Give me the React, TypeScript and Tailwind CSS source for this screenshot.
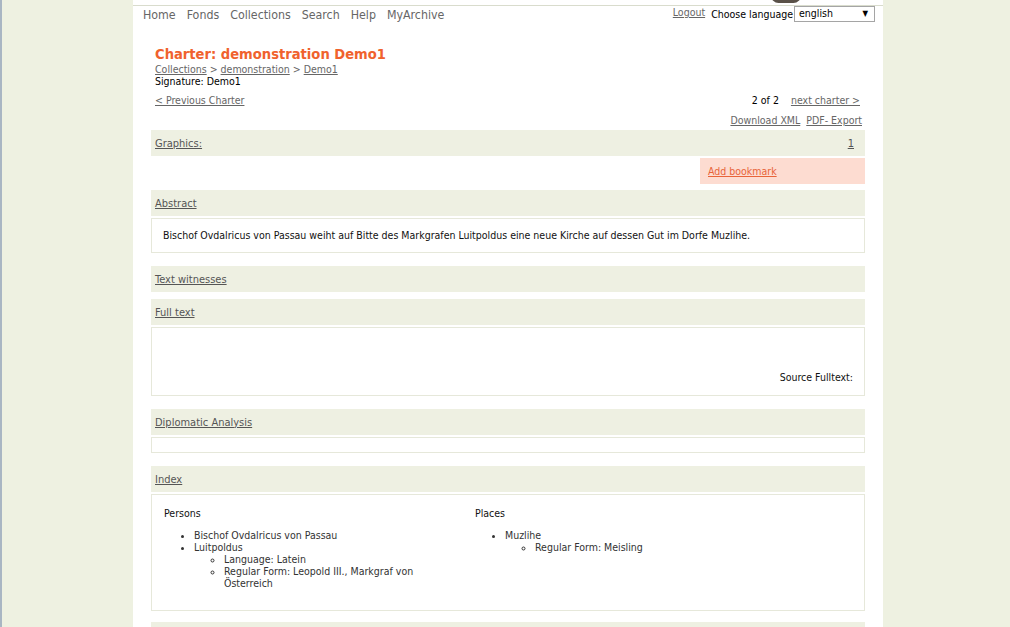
import React from "react";

const F = { fontFamily: '"DejaVu Sans Condensed", "DejaVu Sans", sans-serif' };

function Header({ label, right }: { label: string; right?: string }) {
  return (
    <div className="h-[26px] bg-[#eef0e2] flex items-center justify-between px-[4px] pt-[2px] text-[11px]">
      <a className="underline text-[#555]">{label}</a>
      {right && <a className="underline text-[#555] mr-[7px]">{right}</a>}
    </div>
  );
}

export default function App() {
  return (
    <div style={F} className="w-[1010px] h-[627px] overflow-hidden bg-[#eef1e1] border-l-2 border-[#a9b6c3] relative">
      <div className="ml-[131px] w-[750px] h-full bg-white relative">
        <div className="absolute left-[638px] top-[-12px] w-[30px] h-[15px] rounded-full bg-[#5a5148]" />
        <div className="h-[6px] border-b border-[#d9dccd]" />
        <div className="flex items-center justify-between h-[17px] pl-[10px] pr-[8px]">
          <div className="flex gap-[11px] text-[12.3px] text-[#666] pt-[2px]">
            <span>Home</span>
            <span>Fonds</span>
            <span>Collections</span>
            <span>Search</span>
            <span>Help</span>
            <span>MyArchive</span>
          </div>
          <div className="flex items-center text-[10.5px] text-black">
            <a className="underline text-[#666] mr-[6px] -mt-[3px]">Logout</a>
            <span>Choose language</span>
            <div className="ml-[1px] w-[81px] h-[16px] border border-[#a5a5a5] flex items-center justify-between pl-[4px] pr-[6px] -mt-[1px]">
              <span>english</span>
              <span className="text-[8px]">▼</span>
            </div>
          </div>
        </div>
        <div className="px-[18px] text-[10.5px]">
          <div className="pl-[4px] pt-[23px]">
            <div className="text-[14.6px] font-bold text-[#f0622d] leading-[16px]">Charter: demonstration Demo1</div>
            <div className="leading-[12px] text-[#666] mt-[1px]">
              <a className="underline">Collections</a> &gt; <a className="underline">demonstration</a> &gt; <a className="underline">Demo1</a>
            </div>
            <div className="leading-[12px] text-black">Signature: Demo1</div>
            <div className="flex justify-between leading-[12px] mt-[7px] pr-[5px]">
              <a className="underline text-[#666]">&lt; Previous Charter</a>
              <div className="flex gap-[12px]">
                <span className="text-black">2 of 2</span>
                <a className="underline text-[#666]">next charter &gt;</a>
              </div>
            </div>
            <div className="flex justify-end gap-[6px] leading-[12px] mt-[8px] pr-[3px] text-[#666]">
              <a className="underline">Download XML</a>
              <a className="underline">PDF- Export</a>
            </div>
          </div>
          <div className="mt-[4px]">
            <Header label="Graphics:" right="1" />
            <div className="flex justify-end mt-[2px]">
              <div className="w-[165px] h-[26px] bg-[#fddcd1] flex items-center pl-[8px] pt-[2px]">
                <a className="underline text-[#e8643a]">Add bookmark</a>
              </div>
            </div>
            <div className="mt-[6px]">
              <Header label="Abstract" />
            </div>
            <div className="mt-[2px] h-[35px] border border-[#e6e8da] flex items-center pl-[11px] pt-[1px] text-[#111]">
              Bischof Ovdalricus von Passau weiht auf Bitte des Markgrafen Luitpoldus eine neue Kirche auf dessen Gut im Dorfe Muzlihe.
            </div>
            <div className="mt-[13px]">
              <Header label="Text witnesses" />
            </div>
            <div className="mt-[7px]">
              <Header label="Full text" />
            </div>
            <div className="mt-[2px] h-[69px] border border-[#e6e8da] flex items-end justify-end pr-[11px] pb-[9px] text-[#111]">
              Source Fulltext:
            </div>
            <div className="mt-[13px]">
              <Header label="Diplomatic Analysis" />
            </div>
            <div className="mt-[2px] h-[16px] border border-[#e6e8da]" />
            <div className="mt-[13px]">
              <Header label="Index" />
            </div>
            <div className="mt-[2px] h-[117px] border border-[#e6e8da] flex pl-[12px] pt-[12px] leading-[12px] text-[#111]">
              <div className="w-[311px]">
                <div>Persons</div>
                <ul className="mt-[10px] pl-[30px] list-disc text-[#333]">
                  <li>Bischof Ovdalricus von Passau</li>
                  <li>
                    Luitpoldus
                    <ul className="pl-[30px] list-[circle]">
                      <li>Language: Latein</li>
                      <li className="w-[200px]">Regular Form: Leopold III., Markgraf von Österreich</li>
                    </ul>
                  </li>
                </ul>
              </div>
              <div>
                <div>Places</div>
                <ul className="mt-[10px] pl-[30px] list-disc text-[#333]">
                  <li>
                    Muzlihe
                    <ul className="pl-[30px] list-[circle]">
                      <li>Regular Form: Meisling</li>
                    </ul>
                  </li>
                </ul>
              </div>
            </div>
            <div className="mt-[11px]">
              <Header label="" />
            </div>
          </div>
        </div>
      </div>
    </div>
  );
}
